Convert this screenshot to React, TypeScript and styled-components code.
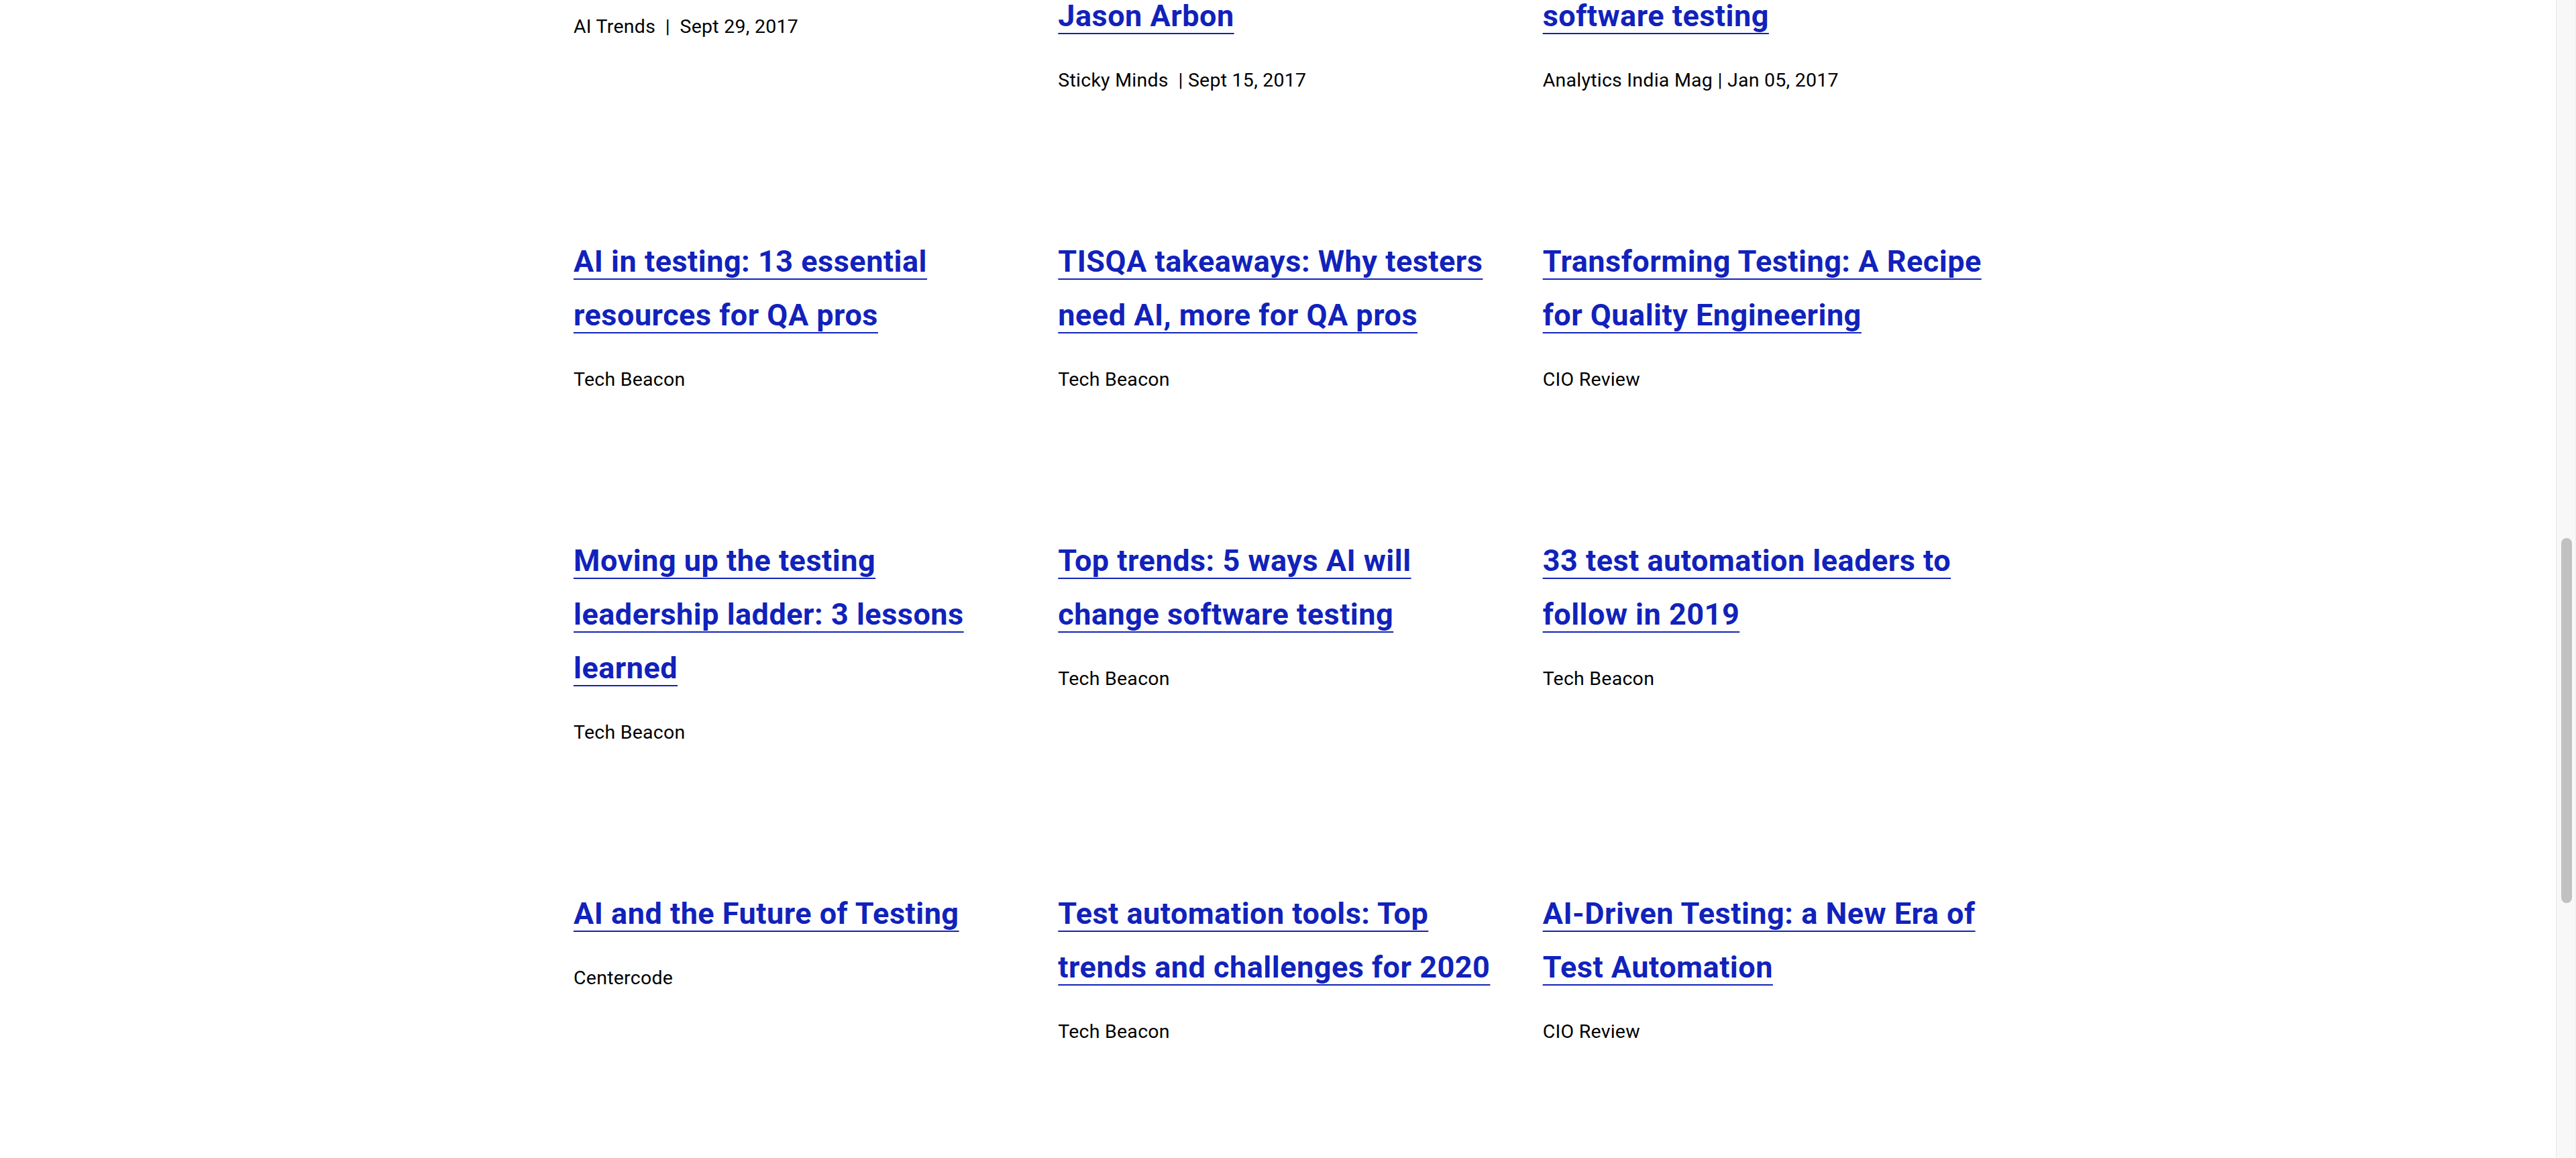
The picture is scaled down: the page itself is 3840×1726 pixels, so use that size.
import React, { useLayoutEffect, useRef, useState } from "react";
import styled, { createGlobalStyle } from "styled-components";

const GlobalStyle = createGlobalStyle`
  html, body {
    margin: 0;
    padding: 0;
    height: 100%;
    overflow: hidden;
    background: #ffffff;
  }
  * { box-sizing: border-box; }
`;

const Frame = styled.div`
  display: flex;
  height: 100vh;
  background: #ffffff;
  font-family: Roboto, "Liberation Sans", sans-serif;
`;

const Viewport = styled.div`
  flex: 1;
  min-width: 0;
  overflow-y: scroll;
  overflow-x: hidden;
  scrollbar-width: none;
  &::-webkit-scrollbar {
    display: none;
  }
`;

const ScrollTrack = styled.div`
  flex: 0 0 30px;
  display: flex;
  flex-direction: column;
  align-items: center;
  padding-left: 1px;
  background: #f8f8f8;
  border-left: 1px solid #e6e6e6;
  border-right: 1px solid #efefef;
`;

const ScrollThumb = styled.div`
  width: 16px;
  margin-left: 1px;
  border-radius: 8px;
  background: #c1c1c1;
`;

const Page = styled.div`
  min-height: 5476px;
`;

const Lead = styled.div`
  height: 2368px;
`;

const Section = styled.section`
  max-width: 2100px;
  margin: 0 auto;
  padding-bottom: 400px;
`;

const Grid = styled.div`
  display: grid;
  grid-template-columns: repeat(3, 1fr);
  column-gap: 67px;
  row-gap: 210px;
  align-items: start;
`;

const Card = styled.article`
  display: flex;
  flex-direction: column;
`;

const Title = styled.h3`
  margin: 0;
  font-size: 45px;
  line-height: 80px;
  font-weight: 700;
  letter-spacing: 0.5px;
  color: #1122bb;
`;

const TitleLink = styled.a`
  color: #1122bb;
  text-decoration: underline;
  text-decoration-thickness: 2px;
  text-underline-offset: 10px;
`;

const Meta = styled.p`
  margin: 36px 0 0;
  font-size: 28.5px;
  line-height: 40px;
  font-weight: 400;
  letter-spacing: 0.25px;
  color: #000000;
  white-space: pre;
`;

type Article = { lines: string[]; source: string };

const articles: Article[] = [
  { lines: ["AI is coming to", "software testing"], source: "AI Trends \u00a0|\u00a0 Sept 29, 2017" },
  { lines: ["Machine learning and", "testing: an interview with", "Jason Arbon"], source: "Sticky Minds \u00a0| Sept 15, 2017" },
  { lines: ["How AI and machine", "learning are transforming", "software testing"], source: "Analytics India Mag | Jan 05, 2017" },
  { lines: ["AI in testing: 13 essential", "resources for QA pros"], source: "Tech Beacon" },
  { lines: ["TISQA takeaways: Why testers", "need AI, more for QA pros"], source: "Tech Beacon" },
  { lines: ["Transforming Testing: A Recipe", "for Quality Engineering"], source: "CIO Review" },
  { lines: ["Moving up the testing", "leadership ladder: 3 lessons", "learned"], source: "Tech Beacon" },
  { lines: ["Top trends: 5 ways AI will", "change software testing"], source: "Tech Beacon" },
  { lines: ["33 test automation leaders to", "follow in 2019"], source: "Tech Beacon" },
  { lines: ["AI and the Future of Testing"], source: "Centercode" },
  { lines: ["Test automation tools: Top", "trends and challenges for 2020"], source: "Tech Beacon" },
  { lines: ["AI-Driven Testing: a New Era of", "Test Automation"], source: "CIO Review" },
];

function ArticleCard({ article }: { article: Article }) {
  return (
    <Card>
      <Title>
        <TitleLink href="#">
          {article.lines.map((line, i) => (
            <React.Fragment key={i}>
              {i > 0 && <br />}
              {line}
            </React.Fragment>
          ))}
        </TitleLink>
      </Title>
      <Meta>{article.source}</Meta>
    </Card>
  );
}

export default function App() {
  const ref = useRef<HTMLDivElement>(null);
  const [thumb, setThumb] = useState({ top: 802, height: 544 });

  useLayoutEffect(() => {
    const update = () => {
      const el = ref.current;
      if (!el) return;
      el.scrollTop = 2544;
      const view = el.clientHeight;
      const total = el.scrollHeight;
      const height = Math.max(20, (view * view) / total);
      const range = total - view;
      const top = range > 0 ? (el.scrollTop / range) * (view - height) : 0;
      setThumb({ top, height });
    };
    update();
    const t = setTimeout(update, 50);
    return () => clearTimeout(t);
  }, []);

  return (
    <>
      <GlobalStyle />
      <Frame>
        <Viewport ref={ref}>
          <Page>
            <Lead />
            <Section>
              <Grid>
                {articles.map((a, i) => (
                  <ArticleCard key={i} article={a} />
                ))}
              </Grid>
            </Section>
          </Page>
        </Viewport>
        <ScrollTrack>
          <ScrollThumb style={{ marginTop: thumb.top, height: thumb.height }} />
        </ScrollTrack>
      </Frame>
    </>
  );
}
